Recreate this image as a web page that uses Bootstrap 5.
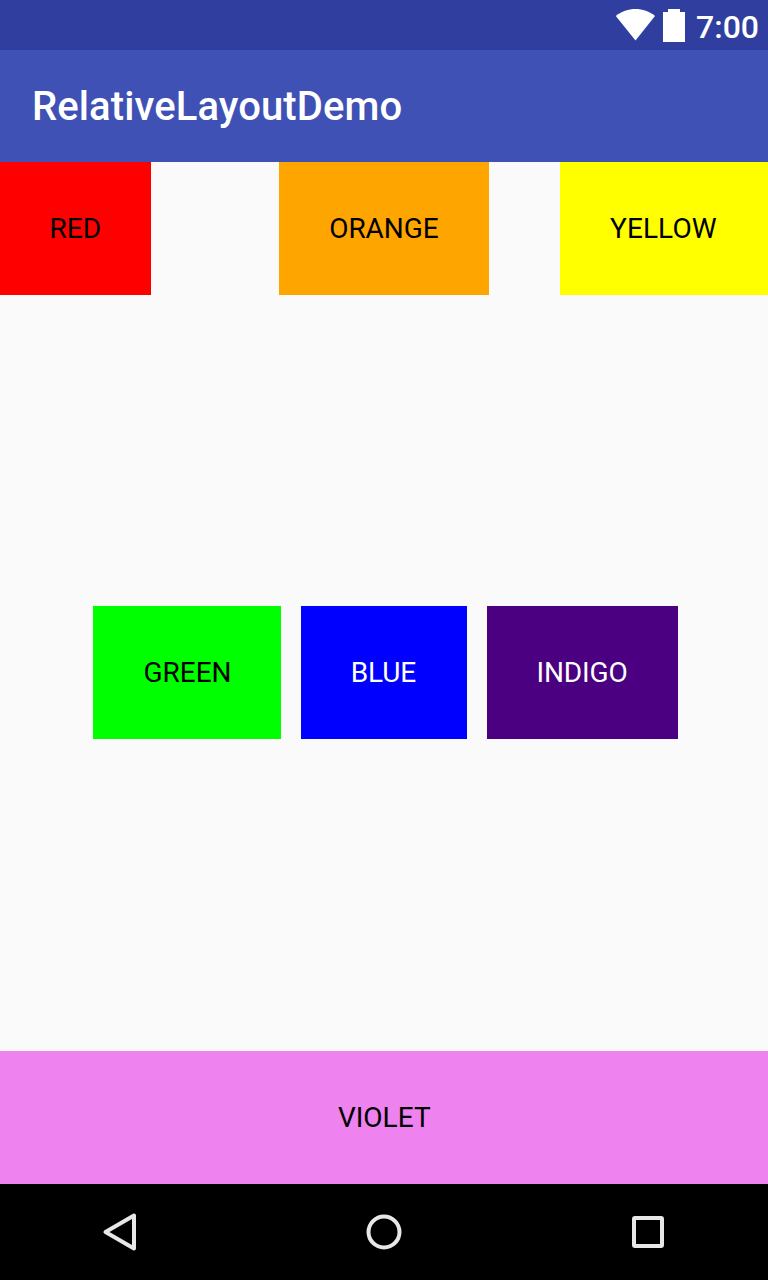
<!DOCTYPE html>
<html lang="en">
<head>
<meta charset="utf-8">
<meta name="viewport" content="width=device-width, initial-scale=1">
<title>RelativeLayoutDemo</title>
<link href="https://cdn.jsdelivr.net/npm/bootstrap@5.3.0/dist/css/bootstrap.min.css" rel="stylesheet">
<style>
body{font-family:Roboto,sans-serif;background:#fafafa;height:1280px;overflow:hidden}
.status-bar{height:50px;background:#303f9f;padding-right:9px}
.clock{font-size:32px;font-weight:500;line-height:50px;padding-top:2px;margin-left:11px}
.app-bar{height:112px;background:#3f51b5;padding:0 32px}
.app-title{font-size:40px;font-weight:500;line-height:48px;padding-top:1px;letter-spacing:.1px}
.tile{height:133px;font-size:28px;line-height:33px;padding:50px 0 50px 50px;white-space:nowrap;color:#000}
.red{width:151px;background:#f00;padding-left:49.5px}
.orange{width:210px;background:#ffa500;margin-left:128px;padding-left:50.3px;letter-spacing:-.1px}
.yellow{width:208px;background:#ff0;letter-spacing:.1px}
.green{width:188px;background:#0f0;padding-left:50.4px}
.blue{width:166px;background:#00f;color:#fff;padding-left:49.8px;letter-spacing:-.15px}
.indigo{width:191px;background:#4b0082;color:#fff;padding-left:49.4px;letter-spacing:-.1px}
.middle{gap:20px;padding-left:93px;margin-bottom:1px}
.violet{background:#ee82ee;padding-left:.5px;text-align:center}
.nav-keys{height:96px;background:#000}
</style>
<script src="https://cdn.jsdelivr.net/npm/bootstrap@5.3.0/dist/js/bootstrap.bundle.min.js"></script>
</head>
<body class="d-flex flex-column m-0">
<header class="flex-shrink-0 text-white">
  <div class="status-bar d-flex justify-content-end">
    <svg width="40" height="50" viewBox="0 0 40 50" fill="#fff"><path d="M.8 16C12 6.800 29 6.800 40 16L20.500 40.500Z"/></svg>
    <svg width="30" height="50" viewBox="0 0 30 50" fill="#fff"><path d="M8 12h5V9h12v3h5v30H8Z"/></svg>
    <span class="clock">7:00</span>
  </div>
  <div class="app-bar navbar"><h1 class="app-title mb-0">RelativeLayoutDemo</h1></div>
</header>
<main class="d-flex flex-column flex-grow-1 justify-content-between">
  <div class="d-flex"><div class="tile red">RED</div><div class="tile orange">ORANGE</div><div class="tile yellow ms-auto">YELLOW</div></div>
  <div class="middle d-flex"><div class="tile green">GREEN</div><div class="tile blue">BLUE</div><div class="tile indigo">INDIGO</div></div>
  <div class="tile violet">VIOLET</div>
</main>
<footer class="nav-keys d-flex flex-shrink-0">
  <svg width="768" height="96" viewBox="0 0 768 96" fill="none" stroke="#e8e8e8" stroke-width="4" stroke-linejoin="round"><path d="M134 31.500v33L105.500 48Z"/><circle cx="384" cy="48" r="15.500"/><rect x="634" y="34" width="28" height="28" rx="1"/></svg>
</footer>
</body>
</html>
